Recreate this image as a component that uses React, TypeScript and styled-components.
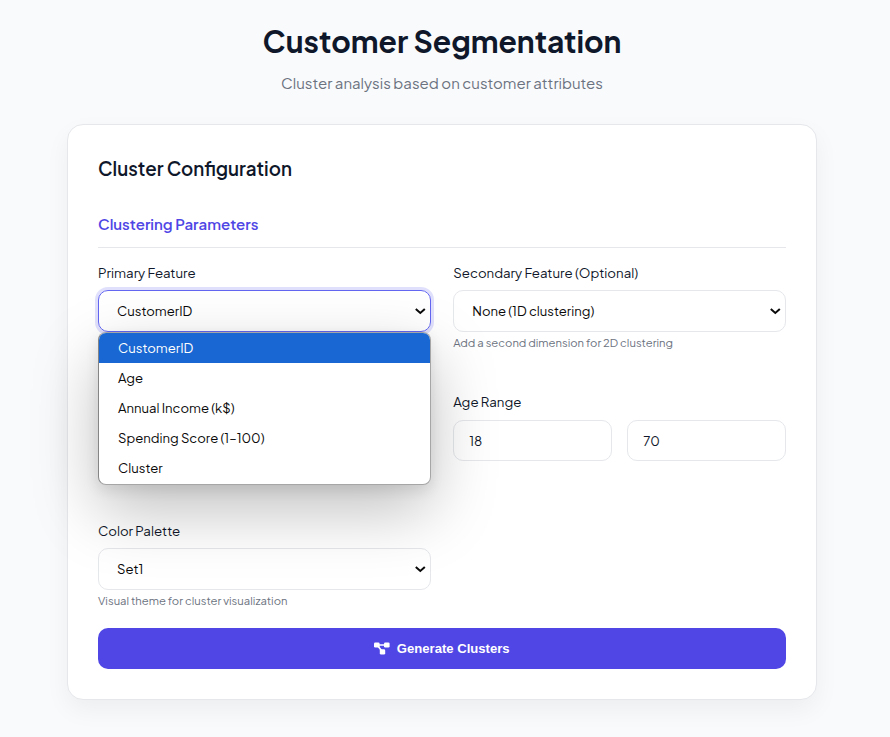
import React from "react";
import styled, { createGlobalStyle } from "styled-components";

const GlobalStyle = createGlobalStyle`
  *, *::before, *::after { box-sizing: border-box; }
  body {
    margin: 0;
    background: #f9fafc;
    color: #0f172a;
    font-family: "Plus Jakarta Sans", Inter, sans-serif;
    font-size: 13px;
    overflow: hidden;
  }
`;

const Page = styled.main`
  width: 884px;
  height: 737px;
  padding-top: 22px;
  display: flex;
  flex-direction: column;
  align-items: center;
`;

const Title = styled.h1`
  margin: 0;
  height: 40px;
  line-height: 39px;
  font-size: 30px;
  font-weight: 700;
  white-space: nowrap;
`;

const Subtitle = styled.p`
  margin: 9px 0 0;
  height: 26px;
  line-height: 24px;
  font-size: 15px;
  color: #6b7280;
  white-space: nowrap;
`;

const Card = styled.section`
  margin-top: 27px;
  width: 750px;
  height: 576px;
  padding: 30px;
  background: #fff;
  border: 1px solid #e5e7eb;
  border-radius: 16px;
  box-shadow: 0 10px 25px rgba(0, 0, 0, 0.05);
`;

const CardTitle = styled.h2`
  margin: 0;
  height: 30px;
  line-height: 28px;
  font-size: 18.75px;
  font-weight: 600;
  white-space: nowrap;
`;

const SectionTitle = styled.h3`
  margin: 24px 0 0;
  height: 39px;
  padding-top: 2px;
  line-height: 26px;
  font-size: 15px;
  font-weight: 600;
  color: #4f46e5;
  border-bottom: 1px solid #e5e7eb;
  white-space: nowrap;
`;

const Fields = styled.form`
  margin-top: 14px;
  display: grid;
  grid-template-columns: 332.75px 332.75px;
  grid-template-rows: 129px 129px 108px 41px;
  column-gap: 22.5px;
`;

const Field = styled.div<{ $column?: number }>`
  position: relative;
  grid-column: ${(p) => p.$column ?? "auto"};
`;

const Label = styled.label`
  display: block;
  height: 22px;
  margin-bottom: 6px;
  line-height: 22px;
  font-size: 13.25px;
  font-weight: 400;
  white-space: nowrap;
`;

const SelectBox = styled.div<{ $focused?: boolean }>`
  height: 42px;
  padding: 0 4px 1px 18px;
  display: flex;
  align-items: center;
  justify-content: space-between;
  border: 1px solid ${(p) => (p.$focused ? "#6366f1" : "#e5e7eb")};
  border-radius: 10px;
  box-shadow: ${(p) => (p.$focused ? "0 0 0 3px rgba(99, 102, 241, 0.2)" : "none")};
  font-size: 13.1px;
  white-space: nowrap;
  color: #0a0a0a;
`;

const Hint = styled.small`
  display: block;
  line-height: 20px;
  font-size: 11.25px;
  color: #6b7280;
  white-space: nowrap;
`;

const RangeRow = styled.div`
  display: grid;
  grid-template-columns: 1fr 1fr;
  gap: 15px;
  padding-top: 1px;
`;

const NumberInput = styled.input`
  width: 100%;
  height: 41px;
  padding: 0 15px 1px;
  border: 1px solid #e5e7eb;
  border-radius: 10px;
  background: transparent;
  color: #0f172a;
  font: inherit;
  font-size: 13.1px;
  outline: none;
`;

const Menu = styled.ul`
  position: absolute;
  z-index: 2;
  top: 70px;
  left: 0;
  width: 333px;
  height: 153px;
  margin: 0;
  padding: 0;
  list-style: none;
  overflow: hidden;
  background: #fff;
  border: 1px solid #a6a6a6;
  border-left-color: #858585;
  border-radius: 8px;
  font-size: 13.1px;
  box-shadow: 0 25px 65px rgba(0, 0, 0, 0.25), 0 5px 14px rgba(0, 0, 0, 0.09);
`;

const Option = styled.li<{ $selected?: boolean }>`
  height: 30px;
  padding-left: 19px;
  line-height: 30px;
  background: ${(p) => (p.$selected ? "#1967d2" : "transparent")};
  color: ${(p) => (p.$selected ? "#fff" : "#0a0a0a")};
  white-space: nowrap;
`;

const SubmitButton = styled.button`
  grid-column: 1 / -1;
  height: 41px;
  padding: 0;
  display: flex;
  align-items: center;
  justify-content: center;
  gap: 6.5px;
  border: 0;
  border-radius: 10px;
  background: #4f46e5;
  color: #fff;
  font: bold 13.1px "Liberation Sans", Arial, sans-serif;
`;

const DiagramIcon = () => (
  <svg width="16" height="13" viewBox="0 0 16 13" fill="#fff">
    <rect x="0" y="0.5" width="5.6" height="5" rx="1.3" />
    <rect x="10" y="0.5" width="5.6" height="5" rx="1.3" />
    <rect x="5.8" y="7.3" width="5.4" height="5.2" rx="1.3" />
    <path d="M4.5 3h6.5M4.2 4.2l3.2 4.2" stroke="#fff" strokeWidth="1.7" />
  </svg>
);

const Chevron = () => (
  <svg width="12" height="8" viewBox="0 0 12 8" fill="none">
    <path d="M1.8 2 6.3 6l4.5-4" stroke="#0a0a0a" strokeWidth="2" />
  </svg>
);

const options = [
  "CustomerID",
  "Age",
  "Annual Income (k$)",
  "Spending Score (1–100)",
  "Cluster",
];

export default function App() {
  return (
    <>
      <GlobalStyle />
      <Page>
        <Title>Customer Segmentation</Title>
        <Subtitle>Cluster analysis based on customer attributes</Subtitle>
        <Card>
          <CardTitle>Cluster Configuration</CardTitle>
          <SectionTitle>Clustering Parameters</SectionTitle>
          <Fields>
            <Field>
              <Label>Primary Feature</Label>
              <SelectBox $focused>
                CustomerID
                <Chevron />
              </SelectBox>
              <Menu>
                {options.map((name, i) => (
                  <Option key={name} $selected={i === 0}>
                    {name}
                  </Option>
                ))}
              </Menu>
            </Field>
            <Field>
              <Label>Secondary Feature (Optional)</Label>
              <SelectBox>
                None (1D clustering)
                <Chevron />
              </SelectBox>
              <Hint>Add a second dimension for 2D clustering</Hint>
            </Field>
            <Field $column={2}>
              <Label>Age Range</Label>
              <RangeRow>
                <NumberInput defaultValue="18" />
                <NumberInput defaultValue="70" />
              </RangeRow>
            </Field>
            <Field $column={1}>
              <Label>Color Palette</Label>
              <SelectBox>
                Set1
                <Chevron />
              </SelectBox>
              <Hint>Visual theme for cluster visualization</Hint>
            </Field>
            <SubmitButton type="button">
              <DiagramIcon />
              Generate Clusters
            </SubmitButton>
          </Fields>
        </Card>
      </Page>
    </>
  );
}
